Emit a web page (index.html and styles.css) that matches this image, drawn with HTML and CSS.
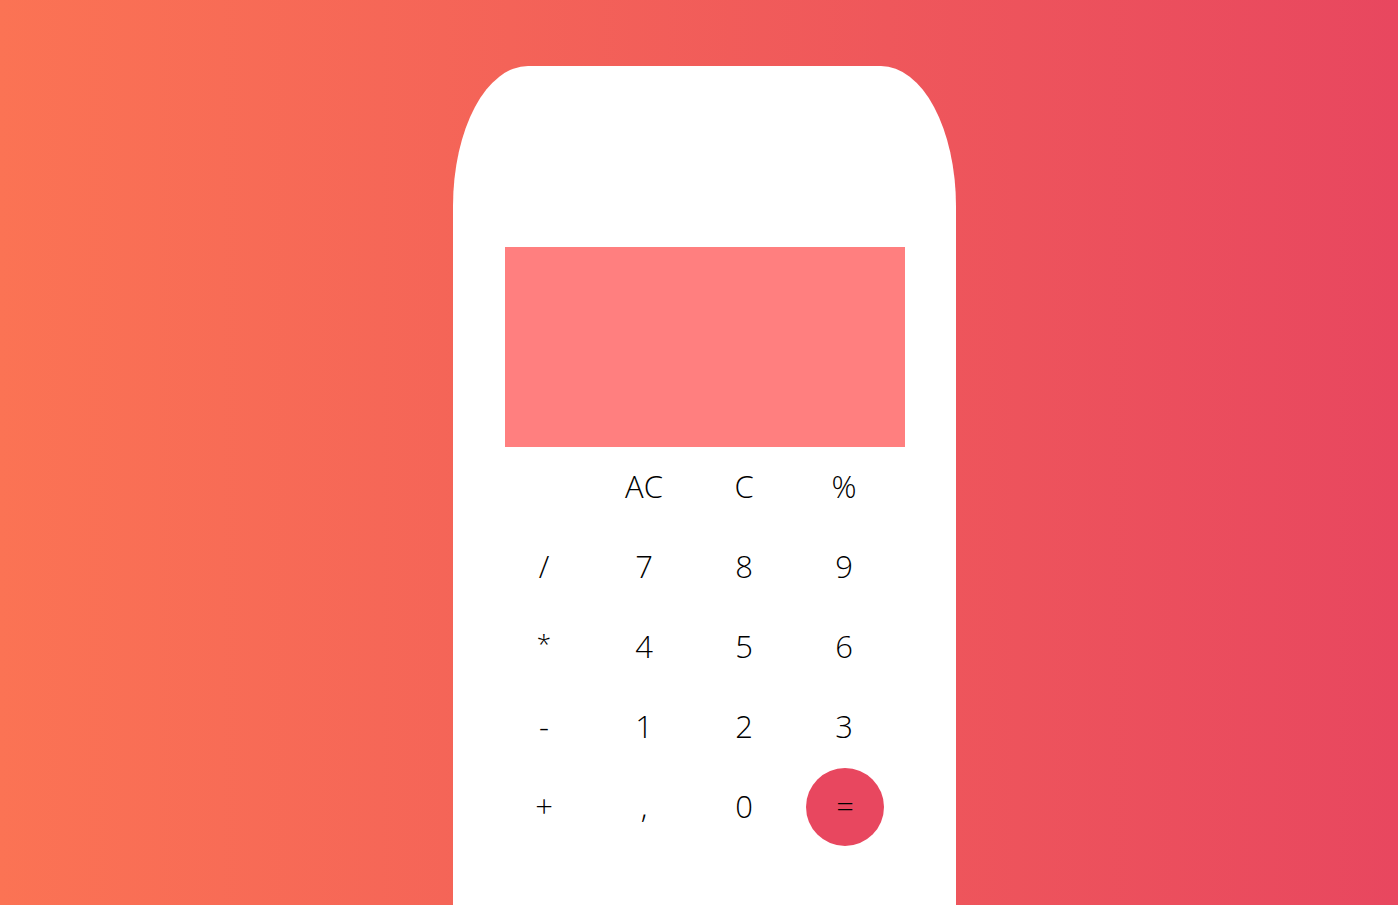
FILE: index.html
```html
<!DOCTYPE html>
<html lang="en">
<head>
<meta charset="utf-8">
<title>Calculator</title>
<link rel="stylesheet" href="styles.css">
</head>
<body>
<main class="page">
  <div class="calculator">
    <div class="display"></div>
    <div class="keys">
      <span class="key"></span>
      <button class="key">AC</button>
      <button class="key">C</button>
      <button class="key">%</button>
      <button class="key">/</button>
      <button class="key">7</button>
      <button class="key">8</button>
      <button class="key">9</button>
      <button class="key key-small">*</button>
      <button class="key">4</button>
      <button class="key">5</button>
      <button class="key">6</button>
      <button class="key">-</button>
      <button class="key">1</button>
      <button class="key">2</button>
      <button class="key">3</button>
      <button class="key">+</button>
      <button class="key">,</button>
      <button class="key">0</button>
      <button class="key key-equal">=</button>
    </div>
  </div>
</main>
</body>
</html>
```
FILE: styles.css
```css
* { box-sizing: border-box; }
html, body { margin: 0; padding: 0; }
body {
  width: 1398px;
  height: 905px;
  overflow: hidden;
  background: linear-gradient(90deg, #fb7354 0%, #e8475f 100%);
  font-family: "Open Sans", "Liberation Sans", sans-serif;
}
.page {
  height: 905px;
  padding-top: 66px;
}
.calculator {
  width: 503px;
  height: 839px;
  margin-left: calc(50% - 246px);
  background: #ffffff;
  border-radius: 75px 75px 0 0 / 140px 140px 0 0;
  padding: 181px 51px 0 52px;
}
.display {
  width: 400px;
  height: 200px;
  background: #ff7f7f;
}
.keys {
  margin-top: 1px;
  display: grid;
  grid-template-columns: repeat(4, 78px);
  grid-auto-rows: 78px;
  column-gap: 22px;
  row-gap: 2px;
}
.key {
  display: flex;
  align-items: center;
  justify-content: center;
  border: 0;
  padding: 0 0 2px 0;
  margin: 0;
  background: transparent;
  color: #000;
  font-family: inherit;
  font-size: 31px;
  font-weight: 300;
  line-height: 1;
  border-radius: 50%;
}
.key-small {
  font-size: 26px;
  padding-bottom: 8px;
}
.key-equal {
  background: #e8475f;
  transform: translateX(1px);
}
```
